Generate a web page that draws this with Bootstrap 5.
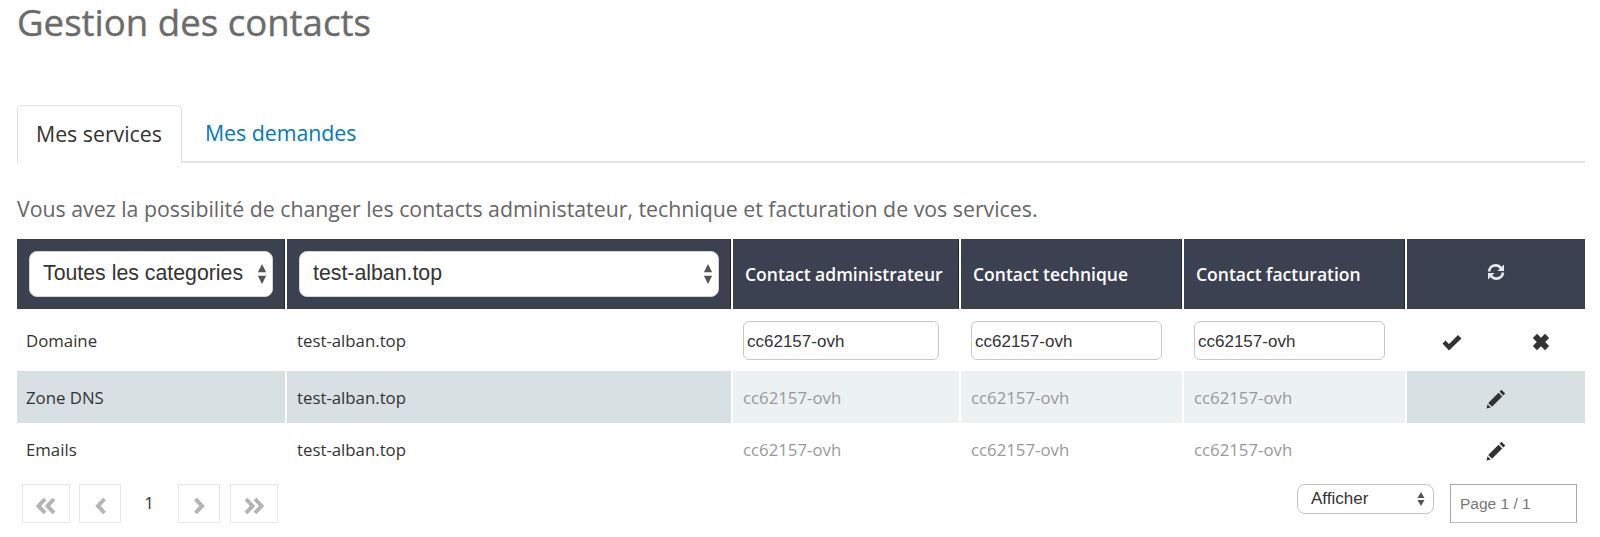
<!DOCTYPE html>
<html lang="fr">
<head>
    <meta charset="UTF-8">
    <meta name="viewport" content="width=device-width, initial-scale=1.0">
    <title>Gestion des contacts</title>
    <link rel="stylesheet" href="https://cdn.jsdelivr.net/npm/bootstrap@5.3.0/dist/css/bootstrap.min.css">
    <style>
        body { font-family: "Open Sans", sans-serif; color: #333; background: #fff; overflow: hidden; }
        .page-wrap { padding: 0 15px 0 17px; }
        .page-title { font-family: "Open Sans", sans-serif; font-size: 36.6px; font-weight: 400; -webkit-text-stroke: 0.4px #6b6b6b; color: #6b6b6b; line-height: 44px; margin: 0 0 61px; }
        .nav-tabs.svc-tabs { border-bottom: 2px solid #e4e4e4; height: 58px; }
        .svc-tabs .nav-link { font-size: 21.3px; line-height: 27px; padding: 14px 19px 15px; color: #0079c1; border: 0; margin: 0; }
        .svc-tabs .nav-item + .nav-item .nav-link { padding-left: 23px; }
        .svc-tabs .nav-link.active { color: #333; border: 1px solid #e0e0e0; border-bottom: 2px solid #fff; border-radius: 5px 5px 0 0; margin-bottom: -2px; height: 59px; padding: 14px 19px 14px 18px; }
        .intro-text { font-size: 21.3px; line-height: 27px; color: #666; margin: 32px 0 17px; }
        .contact-table { table-layout: fixed; width: 1568px; margin: 0; border-collapse: separate; border-spacing: 0; }
        .contact-table th { background: #3c4152; color: #fff; height: 70px; padding: 0 12px; font-size: 17.5px; font-weight: 600; vertical-align: middle; border: 0; border-right: 2px solid #fff; box-shadow: inset -1px 0 0 #1c2440; white-space: nowrap; }
        .contact-table th:last-child { border-right: 0; box-shadow: none; text-align: center; padding-bottom: 4px; }
        .contact-table td { font-size: 16.8px; padding: 2px 9px 0; vertical-align: middle; height: 52px; border: 0; border-right: 2px solid #fff; color: #333; background: #fff; }
        .contact-table td:nth-child(n+2) { padding-left: 10px; }
        .contact-table td:last-child { border-right: 0; padding: 3px 0 0; }
        .contact-table tr.row-edit td { height: 62px; }
        .contact-table tr.row-edit td.input-cell { padding: 0 20px 0 10px; }
        .contact-table td.muted-cell { color: #999; }
        .contact-table tr.row-alt td { background: #d8e0e3; }
        .contact-table tr.row-alt td.muted-cell { background: #ecf1f1; color: #999; }
        .head-select { font-family: "Liberation Sans", sans-serif; font-size: 21.3px; height: 46px; border: 1px solid #d4d4d4; border-radius: 8px; color: #333; padding: 0 26px 0 13px; background-position: right 5px center; background-size: 10px 22px; background-image: url("data:image/svg+xml,%3csvg xmlns='http://www.w3.org/2000/svg' viewBox='0 0 10 24'%3e%3cpath fill='%23555' d='M5 1l4.5 9h-9zM5 23L.5 14h9z'/%3e%3c/svg%3e"); }
        .cell-input { font-family: "Liberation Sans", sans-serif; font-size: 17px; height: 39px; padding: 3px 3px 0; border: 1px solid #c8c8c8; border-radius: 6px; color: #333; }
        .icon-dark { fill: #333; display: block; }
        .footer-bar { margin-top: 9px; }
        .pager-list { margin: 0 0 0 5px; align-items: flex-start; }
        .pager-list .page-item .page-link { display: flex; align-items: center; justify-content: center; height: 39px; margin: 0; padding: 5px 0 0; border: 1px solid #e8e8e8; border-radius: 0; background: #fff; }
        .pager-list .pager-wide .page-link { width: 48px; }
        .pager-list .pager-narrow .page-link { width: 42px; }
        .pager-list .pager-gap-r { margin-right: 9px; }
        .pager-list .pager-gap-l { margin-right: 10px; }
        .pager-list .pager-current { width: 56px; text-align: center; font-size: 17px; line-height: 38px; color: #333; }
        .pager-list .pager-narrow + .pager-current + .pager-narrow { margin-left: 1px; }
        .show-select { font-family: "Liberation Sans", sans-serif; font-size: 17px; width: 137px; height: 30px; padding: 0 20px 0 13px; border: 1px solid #c4c4c4; border-radius: 8px; color: #333; background-position: right 8px center; background-size: 8px 16px; background-image: url("data:image/svg+xml,%3csvg xmlns='http://www.w3.org/2000/svg' viewBox='0 0 8 16'%3e%3cpath fill='%23555' d='M4 1l3.5 6h-7zM4 15L.5 9h7z'/%3e%3c/svg%3e"); }
        .page-info { font-family: "Liberation Sans", sans-serif; font-size: 15.5px; color: #777; width: 127px; height: 39px; line-height: 38px; border: 1px solid #aaa; border-bottom-color: #bbb; padding-left: 9px; margin: 0 8px 0 16px; }
    </style>
</head>
<body>
    <div class="page-wrap">
        <h1 class="page-title">Gestion des contacts</h1>

        <ul class="nav nav-tabs svc-tabs">
            <li class="nav-item"><a class="nav-link active" href="#">Mes services</a></li>
            <li class="nav-item"><a class="nav-link" href="#">Mes demandes</a></li>
        </ul>

        <p class="intro-text">Vous avez la possibilité de changer les contacts administateur, technique et facturation de vos services.</p>

        <table class="table contact-table">
            <colgroup>
                <col style="width: 270px">
                <col style="width: 446px">
                <col style="width: 228px">
                <col style="width: 223px">
                <col style="width: 223px">
                <col style="width: 178px">
            </colgroup>
            <thead>
                <tr>
                    <th>
                        <select class="form-select head-select"><option>Toutes les categories</option></select>
                    </th>
                    <th>
                        <select class="form-select head-select"><option>test-alban.top</option></select>
                    </th>
                    <th>Contact administrateur</th>
                    <th>Contact technique</th>
                    <th>Contact facturation</th>
                    <th>
                        <svg class="d-block mx-auto" width="20" height="20" viewBox="0 0 20 20" fill="none" stroke="#e8e9ec" stroke-width="2.6">
                            <path d="M3 9.5C3.4 5.6 6.3 3.4 9.6 3.4c2.3 0 4.2 1 5.4 2.8"/>
                            <path d="M17 10.5c-.4 3.9-3.3 6.1-6.6 6.1-2.3 0-4.2-1-5.4-2.8"/>
                            <path d="M18 2.5v6.5h-6.5z" fill="#e8e9ec" stroke="none"/>
                            <path d="M2 17.5V11h6.5z" fill="#e8e9ec" stroke="none"/>
                        </svg>
                    </th>
                </tr>
            </thead>
            <tbody>
                <tr class="row-edit">
                    <td>Domaine</td>
                    <td>test-alban.top</td>
                    <td class="input-cell"><input class="form-control cell-input" type="text" value="cc62157-ovh"></td>
                    <td class="input-cell"><input class="form-control cell-input" type="text" value="cc62157-ovh"></td>
                    <td class="input-cell"><input class="form-control cell-input" type="text" value="cc62157-ovh"></td>
                    <td>
                        <div class="d-flex justify-content-between">
                            <svg class="icon-dark ms-auto me-auto" width="20" height="18" viewBox="0 0 20 18"><path d="M.5 10.5l3-3 3.5 3.5L16 2l3.5 3.5L7 17.5z"/></svg>
                            <svg class="icon-dark ms-auto me-auto" width="18" height="18" viewBox="0 0 18 18"><path d="M5 .8L9 4.8l4-4L17.2 5l-4 4 4 4-4.2 4.2-4-4-4 4L.8 13l4-4-4-4z"/></svg>
                        </div>
                    </td>
                </tr>
                <tr class="row-alt">
                    <td>Zone DNS</td>
                    <td>test-alban.top</td>
                    <td class="muted-cell">cc62157-ovh</td>
                    <td class="muted-cell">cc62157-ovh</td>
                    <td class="muted-cell">cc62157-ovh</td>
                    <td>
                        <svg class="icon-dark mx-auto" width="20" height="20" viewBox="0 0 20 20"><path d="M15.5.8l3.7 3.7-1.9 1.9-3.7-3.7zM12.5 3.7l3.8 3.8L6 17.8l-3.8-3.8zM1.5 15.2l3.3 3.3-4.3 1z"/></svg>
                    </td>
                </tr>
                <tr>
                    <td>Emails</td>
                    <td>test-alban.top</td>
                    <td class="muted-cell">cc62157-ovh</td>
                    <td class="muted-cell">cc62157-ovh</td>
                    <td class="muted-cell">cc62157-ovh</td>
                    <td>
                        <svg class="icon-dark mx-auto" width="20" height="20" viewBox="0 0 20 20"><path d="M15.5.8l3.7 3.7-1.9 1.9-3.7-3.7zM12.5 3.7l3.8 3.8L6 17.8l-3.8-3.8zM1.5 15.2l3.3 3.3-4.3 1z"/></svg>
                    </td>
                </tr>
            </tbody>
        </table>

        <div class="d-flex justify-content-between align-items-start footer-bar">
            <ul class="pagination pager-list">
                <li class="page-item pager-wide pager-gap-r"><a class="page-link" href="#">
                    <svg width="22" height="18" viewBox="0 0 22 18" fill="none" stroke="#b4b4b4" stroke-width="4"><path d="M10 2L3.5 9l6.5 7M19 2l-6.5 7 6.5 7"/></svg>
                </a></li>
                <li class="page-item pager-narrow"><a class="page-link" href="#">
                    <svg width="13" height="18" viewBox="0 0 13 18" fill="none" stroke="#b4b4b4" stroke-width="4"><path d="M10.5 2L4 9l6.5 7"/></svg>
                </a></li>
                <li class="pager-current">1</li>
                <li class="page-item pager-narrow pager-gap-l"><a class="page-link" href="#">
                    <svg width="13" height="18" viewBox="0 0 13 18" fill="none" stroke="#b4b4b4" stroke-width="4"><path d="M2.5 2L9 9l-6.5 7"/></svg>
                </a></li>
                <li class="page-item pager-wide"><a class="page-link" href="#">
                    <svg width="22" height="18" viewBox="0 0 22 18" fill="none" stroke="#b4b4b4" stroke-width="4"><path d="M3 2l6.5 7L3 16M12 2l6.5 7-6.5 7"/></svg>
                </a></li>
            </ul>
            <div class="d-flex align-items-start">
                <select class="form-select show-select"><option>Afficher</option></select>
                <div class="page-info">Page 1 / 1</div>
            </div>
        </div>
    </div>
</body>
</html>
